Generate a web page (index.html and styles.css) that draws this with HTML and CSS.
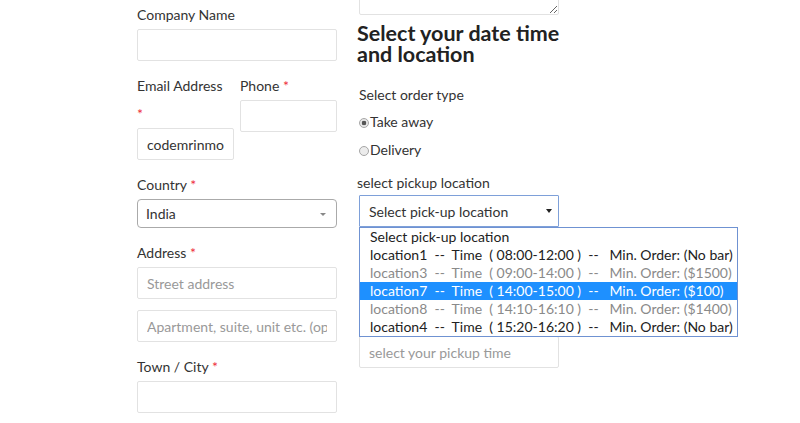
FILE: index.html
```html
<!DOCTYPE html>
<html lang="en">
<head>
    <meta charset="UTF-8">
    <meta name="viewport" content="width=device-width, initial-scale=1.0">
    <title>Checkout</title>
    <link rel="stylesheet" href="styles.css">
</head>
<body>
    <div class="checkout">
        <div class="col col-billing">
            <p class="form-row">
                <label for="billing-company">Company Name</label>
                <input type="text" id="billing-company" class="input-text">
            </p>
            <div class="form-row-pair">
                <p class="form-row">
                    <label class="label-wrap" for="billing-email">Email Address <abbr class="required">*</abbr></label>
                    <input type="email" id="billing-email" class="input-text" value="codemrinmore@gmail.com">
                </p>
                <p class="form-row">
                    <label for="billing-phone">Phone <abbr class="required">*</abbr></label>
                    <input type="tel" id="billing-phone" class="input-text">
                </p>
            </div>
            <p class="form-row">
                <label for="billing-country">Country <abbr class="required">*</abbr></label>
                <span class="select-wrap country-select">
                    <select id="billing-country">
                        <option>India</option>
                    </select>
                </span>
            </p>
            <p class="form-row">
                <label for="billing-address-1">Address <abbr class="required">*</abbr></label>
                <input type="text" id="billing-address-1" class="input-text" placeholder="Street address">
            </p>
            <p class="form-row">
                <input type="text" id="billing-address-2" class="input-text" placeholder="Apartment, suite, unit etc. (optional)">
            </p>
            <p class="form-row">
                <label for="billing-city">Town / City <abbr class="required">*</abbr></label>
                <input type="text" id="billing-city" class="input-text">
            </p>
        </div>

        <div class="col col-order">
            <textarea class="order-notes"></textarea>
            <h3>Select your date time and location</h3>

            <p class="order-type-title">Select order type</p>
            <label class="radio-row"><input type="radio" name="order-type" checked>Take away</label>
            <label class="radio-row"><input type="radio" name="order-type">Delivery</label>

            <label class="pickup-label" for="pickup-location">select pickup location</label>
            <div class="pickup-select">
                <span class="select-wrap location-select">
                    <select id="pickup-location">
                        <option>Select pick-up location</option>
                    </select>
                </span>
                <ul class="dropdown">
                    <li>Select pick-up location</li>
                    <li>location1  --  Time  ( 08:00-12:00 )  --   Min. Order: (No bar)</li>
                    <li class="disabled">location3  --  Time  ( 09:00-14:00 )  --   Min. Order: ($1500)</li>
                    <li class="active">location7  --  Time  ( 14:00-15:00 )  --   Min. Order: ($100)</li>
                    <li class="disabled">location8  --  Time  ( 14:10-16:10 )  --   Min. Order: ($1400)</li>
                    <li>location4  --  Time  ( 15:20-16:20 )  --   Min. Order: (No bar)</li>
                </ul>
            </div>

            <p class="pickup-time">
                <input type="text" id="pickup-time" class="input-text" placeholder="select your pickup time">
            </p>
        </div>
    </div>
</body>
</html>
```

FILE: styles.css
```css
body {
    margin: 0;
    background: #fff;
    color: #333;
    font-family: Lato, "Liberation Sans", sans-serif;
    font-size: 14px;
    overflow: hidden;
}
.checkout {
    display: flex;
    align-items: flex-start;
    gap: 20px;
    padding-left: 137px;
}
.col-billing {
    width: 200px;
    padding-top: 1px;
}
.col-order {
    width: 220px;
}
.form-row {
    margin: 0 0 11px;
}
.form-row label {
    display: block;
    line-height: 28px;
}
/* narrow column: the asterisk drops to its own line */
.label-wrap .required {
    display: block;
}
.required {
    color: #ee2d3d;
    text-decoration: none;
    border: none;
}
.form-row-pair {
    display: flex;
    gap: 6px;
}
.form-row-pair .form-row {
    width: 97px;
}
.input-text {
    display: block;
    box-sizing: border-box;
    width: 100%;
    height: 32px;
    margin: 0;
    padding: 0 9px;
    border: 1px solid #e2e2e2;
    border-radius: 2px;
    background: #fff;
    color: #333;
    font: inherit;
    outline: none;
}
.input-text::placeholder {
    color: #999;
}

/* selects: native arrow hidden, small triangle drawn instead */
.select-wrap {
    position: relative;
    display: block;
}
.select-wrap select {
    display: block;
    box-sizing: border-box;
    width: 100%;
    margin: 0;
    -webkit-appearance: none;
    appearance: none;
    background: #fff;
    color: #333;
    font: inherit;
    outline: none;
}
.select-wrap::after {
    content: '';
    position: absolute;
    top: 50%;
    width: 0;
    height: 0;
    pointer-events: none;
}
.country-select select {
    height: 29px;
    padding: 0 8px;
    border: 1px solid #aaa;
    border-radius: 4px;
}
.country-select::after {
    right: 11px;
    margin-top: -1px;
    border-left: 3px solid transparent;
    border-right: 3px solid transparent;
    border-top: 3px solid #888;
}

/* order column */
.order-notes {
    display: block;
    box-sizing: border-box;
    width: 200px;
    height: 56px;
    margin: -41px 0 0 2px;
    border: 1px solid #e2e2e2;
    border-radius: 2px;
    font: inherit;
}
.col-order h3 {
    margin: 8px 0 0;
    color: #222;
    font-size: 21.5px;
    font-weight: 700;
    line-height: 21px;
}
.order-type-title {
    margin: 20px 0 0 2px;
    line-height: 20px;
}
.radio-row {
    display: block;
    margin: 7px 0 0 2px;
    line-height: 20px;
}
.radio-row + .radio-row {
    margin-top: 8px;
}
.radio-row input {
    -webkit-appearance: none;
    appearance: none;
    box-sizing: border-box;
    width: 10px;
    height: 10px;
    margin: 0 1px 0 0;
    border: 1px solid #a6a6a6;
    border-radius: 50%;
    background: #ececec;
    vertical-align: -1px;
}
.radio-row input:checked {
    background: radial-gradient(circle, #555 0 2px, #e6e6e6 2.6px);
}
.pickup-label {
    display: block;
    margin-top: 13px;
    line-height: 20px;
}
.pickup-select {
    position: relative;
    width: 200px;
    margin: 2px 0 0 2px;
}
.location-select select {
    height: 32px;
    padding: 0 9px;
    border: 1px solid #7ea0d9;
    border-radius: 1px;
}
.location-select::after {
    right: 7px;
    margin-top: -2px;
    border-left: 3px solid transparent;
    border-right: 3px solid transparent;
    border-top: 4px solid #222;
}

/* open list of the pickup select, drawn over the rows below */
.dropdown {
    position: absolute;
    top: 100%;
    left: 0;
    z-index: 2;
    width: max-content;
    min-width: 100%;
    margin: 0;
    padding: 0;
    list-style: none;
    border: 1px solid #6f92d2;
    background: #fff;
}
.dropdown li {
    height: 18px;
    padding: 0 4px 0 10px;
    line-height: 18px;
    white-space: pre;
    color: #222;
}
.dropdown li.disabled {
    color: #8a8a8a;
}
.dropdown li.active {
    background: #1e90ff;
    color: #fff;
}
.pickup-time {
    width: 200px;
    margin: 109px 0 0 2px;
}
```
